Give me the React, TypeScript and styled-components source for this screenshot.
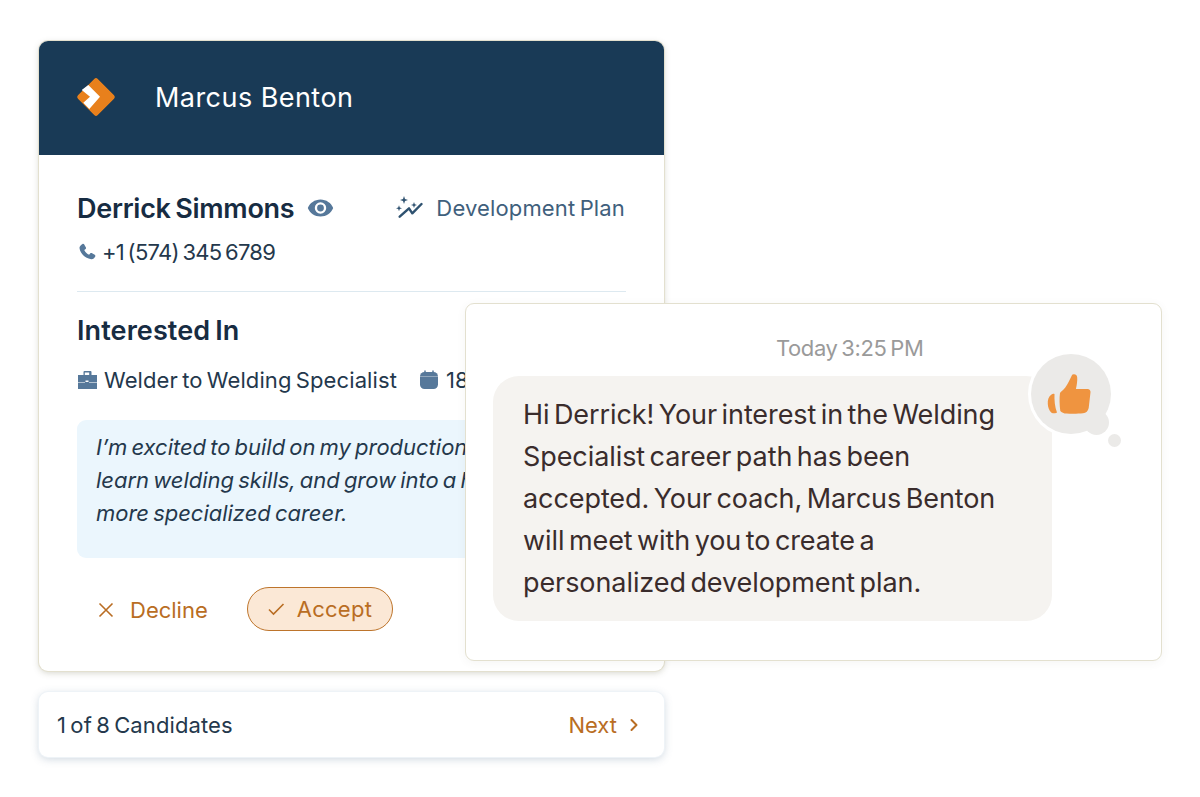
import React from "react";
import styled, { createGlobalStyle } from "styled-components";

const Global = createGlobalStyle`
  html, body { margin: 0; padding: 0; background: #fff; }
  *, *::before, *::after { box-sizing: border-box; }
  body { font-family: Inter, "Liberation Sans", sans-serif; overflow: hidden; }
`;

const Stage = styled.div`
  position: relative;
  width: 1200px;
  height: 797px;
  padding: 41px 0 0 39px;
  display: flex;
  flex-direction: column;
  gap: 21px;
`;

const Card = styled.section`
  width: 625px;
  height: 630px;
  border-radius: 9px;
  background: #fff;
  box-shadow: 0 0 0 1px #e3e0cf, 0 2px 6px rgba(90, 90, 60, 0.25);
  overflow: hidden;
  flex: none;
`;

const Header = styled.header`
  height: 114px;
  background: #193a56;
  display: flex;
  align-items: center;
  padding: 0 0 2px 37px;
  gap: 39px;
`;

const HeaderName = styled.h1`
  margin: 0;
  font-size: 27px;
  font-weight: 400;
  color: #fff;
  letter-spacing: 0.45px;
`;

const Body = styled.div`
  padding: 36px 38px 0;
`;

const TopRow = styled.div`
  display: flex;
  align-items: center;
  justify-content: space-between;
  height: 34px;
`;

const NameWrap = styled.div`
  display: flex;
  align-items: center;
  gap: 13px;
`;

const Name = styled.h2`
  margin: 0;
  font-size: 27px;
  font-weight: 600;
  color: #172c42;
  letter-spacing: -0.27px;
  word-spacing: -2px;
`;

const PlanLink = styled.div`
  display: flex;
  align-items: center;
  gap: 13px;
  font-size: 22px;
  color: #3f607c;
  letter-spacing: 0.15px;
  word-spacing: -2px;
  margin-right: 1px;
`;

const Phone = styled.div`
  display: flex;
  align-items: center;
  gap: 5px;
  margin-top: 12px;
  height: 30px;
  font-size: 22px;
  color: #24384c;
  letter-spacing: -0.7px;
  word-spacing: -2px;
`;

const Rule = styled.hr`
  border: 0;
  height: 1px;
  background: #dde9f0;
  margin: 24px 0 0;
`;

const SectionTitle = styled.h3`
  margin: 21px 0 0;
  font-size: 27px;
  line-height: 36px;
  font-weight: 600;
  color: #172c42;
  letter-spacing: 0.1px;
  word-spacing: -2px;
`;

const MetaRow = styled.div`
  display: flex;
  align-items: center;
  margin-top: 16px;
  height: 30px;
  white-space: nowrap;
`;

const MetaItem = styled.div`
  display: flex;
  align-items: center;
  gap: 7px;
  font-size: 22px;
  color: #24384c;
  letter-spacing: 0.1px;
  word-spacing: -2px;
  margin-right: 22px;
`;

const Note = styled.p`
  margin: 25px 0 0;
  width: 549px;
  height: 138px;
  padding: 11px 19px;
  border-radius: 9px;
  background: #ebf6fd;
  font-size: 22px;
  line-height: 33px;
  font-style: italic;
  color: #24384c;
  letter-spacing: -0.02px;
  word-spacing: -2px;
  white-space: nowrap;
`;

const Actions = styled.div`
  display: flex;
  align-items: center;
  margin-top: 29px;
  padding-left: 21px;
  gap: 39px;
`;

const Decline = styled.button`
  display: flex;
  align-items: center;
  gap: 16px;
  padding: 1px 0 0;
  border: 0;
  background: none;
  font: inherit;
  font-size: 22px;
  color: #b96d23;
  letter-spacing: 0;
`;

const Accept = styled.button`
  display: flex;
  align-items: center;
  gap: 12px;
  width: 146px;
  height: 44px;
  padding: 0 0 1px 20px;
  border: 1px solid #bd742b;
  border-radius: 22px;
  background: #fbe8d6;
  font: inherit;
  font-size: 22px;
  color: #b96d23;
  letter-spacing: 0.25px;
`;

const Pager = styled.nav`
  width: 625px;
  height: 65px;
  padding: 0 25px 0 18px;
  border-radius: 9px;
  background: #fff;
  box-shadow: 0 0 0 1px #eef3f7, 0 2px 8px rgba(90, 120, 150, 0.3);
  display: flex;
  align-items: center;
  justify-content: space-between;
  flex: none;
`;

const PagerCount = styled.span`
  font-size: 22px;
  color: #24384c;
  letter-spacing: 0.1px;
  word-spacing: -2px;
`;

const Next = styled.span`
  display: flex;
  align-items: center;
  gap: 12px;
  margin-left: -1px;
  font-size: 22px;
  color: #b96d23;
`;

const Chat = styled.aside`
  position: absolute;
  left: 465px;
  top: 303px;
  width: 697px;
  height: 358px;
  padding: 29px 0 0 27px;
  background: #fff;
  border: 1px solid #e3e0cf;
  border-radius: 9px;
  box-shadow: 0 2px 10px rgba(90, 90, 60, 0.06);
`;

const Time = styled.div`
  padding-left: 283px;
  font-size: 22px;
  line-height: 30px;
  color: #9a9a9a;
  letter-spacing: -0.4px;
  word-spacing: -2px;
`;

const Bubble = styled.div`
  position: relative;
  width: 559px;
  height: 245px;
  margin-top: 13px;
  padding: 18px 30px;
  border-radius: 26px;
  background: #f5f3f0;
  font-size: 27px;
  line-height: 42px;
  color: #3a2c2c;
  letter-spacing: -0.08px;
  word-spacing: -3px;
  white-space: nowrap;
`;

const Reaction = styled.div`
  position: absolute;
  left: 538px;
  top: -22px;
  width: 80px;
  height: 80px;
  padding-right: 5px;
  border-radius: 50%;
  background: #ebeae8;
  box-shadow: 0 0 0 3px #fff;
  display: flex;
  align-items: center;
  justify-content: center;
`;

const Puff = styled.span<{ $size: number; $x: number; $y: number }>`
  position: absolute;
  width: ${(p) => p.$size}px;
  height: ${(p) => p.$size}px;
  left: ${(p) => p.$x}px;
  top: ${(p) => p.$y}px;
  border-radius: 50%;
  background: #ebeae8;
`;

const Logo = () => (
  <svg width="40" height="40" viewBox="0 0 40 40">
    <rect x="6" y="6" width="28" height="28" rx="2.500" transform="rotate(45 20 20)" fill="#e8801c" />
    <path d="M12.300 8 L24 19.700 L13.300 32 L7.300 25.700 L14 19.700 L5.700 13 Z" fill="#fff" />
  </svg>
);

const Eye = () => (
  <svg width="27" height="20" viewBox="0 0 27 20">
    <path
      fillRule="evenodd"
      fill="#56789a"
      d="M13.5 1.5C7.7 1.5 2.8 5 .8 10c2 5 6.900 8.500 12.700 8.500S24.200 15 26.200 10C24.200 5 19.300 1.500 13.500 1.500zM13.500 15.700a5.700 5.700 0 1 1 0-11.400 5.700 5.700 0 0 1 0 11.400zM13.500 6.600a3.400 3.400 0 1 0 0 6.800 3.400 3.400 0 0 0 0-6.800z"
    />
  </svg>
);

const PlanIcon = () => (
  <svg width="27" height="24" viewBox="0 0 27 24" fill="none" stroke="#2f5270" strokeWidth="2.400" strokeLinecap="round" strokeLinejoin="round">
    <path d="M3.700 20.700 L13 12.300 L16.300 17.300 L25.500 8" />
    <path fill="#2f5270" stroke="none" d="M8 0l1 3 3 1-3 1-1 3-1-3-3-1 3-1zM3 9.300l.8 2.200 2.200.8-2.200.8-.8 2.200-.8-2.200-2.200-.8 2.200-.8zM18 6l.8 2.200L21 9l-2.200.8-.8 2.200-.8-2.200L15 9l2.200-.8z" />
  </svg>
);

const PhoneIcon = () => (
  <svg width="20" height="20" viewBox="0 0 24 24" fill="#56789a">
    <path d="M6.600 2.300c.7-.4 1.500-.2 1.900.5l2.200 3.700c.4.6.2 1.400-.3 1.800L8.700 9.500c1 2.400 3.300 4.800 5.800 5.900l1.300-1.700c.4-.6 1.200-.7 1.800-.4l3.700 2.100c.7.400.9 1.200.6 1.900-.9 2-2.700 3.500-4.800 3.300C10 20 3.600 13.500 3 7.300c-.2-2 1.700-4 3.600-5z" />
  </svg>
);

const Briefcase = () => (
  <svg width="20" height="20" viewBox="0 0 20 20">
    <path fill="#56789a" fillRule="evenodd" d="M6.500 1h7a1 1 0 0 1 1 1v3H20v14H1V5h5.500V2a1 1 0 0 1 1-1zM7.800 2.600V5h4.400V2.600zM8.500 10.500v1.500h3v-1.500z" />
    <path stroke="#fff" strokeWidth="0.800" d="M1 12.500h7M12 12.500h8" opacity="0.7" />
  </svg>
);

const Calendar = () => (
  <svg width="20" height="20" viewBox="0 0 20 20" fill="#56789a">
    <rect x="1" y="2" width="18" height="17" rx="4.500" />
    <path stroke="#fff" strokeWidth="1" d="M1 6.500h18" opacity="0.35" />
    <path stroke="#56789a" strokeWidth="1.500" d="M6 .5v3M14 .5v3" />
  </svg>
);

const Cross = () => (
  <svg width="16" height="16" viewBox="0 0 16 16" stroke="#b96d23" strokeWidth="1.600" fill="none">
    <path d="M1.500 1.500l13 13M14.500 1.500l-13 13" />
  </svg>
);

const Check = () => (
  <svg width="17" height="14" viewBox="0 0 17 14" stroke="#b96d23" strokeWidth="1.600" fill="none">
    <path d="M1 7.500l4.500 4.500L15.500 2" />
  </svg>
);

const Chevron = () => (
  <svg width="10" height="14" viewBox="0 0 10 14" stroke="#b96d23" strokeWidth="2" fill="none" strokeLinecap="round" strokeLinejoin="round">
    <path d="M2.500 2l5 5-5 5" />
  </svg>
);

const Thumb = () => (
  <svg width="44" height="42" viewBox="0 0 44 42" fill="#ef9440">
    <path d="M7.500 21c-1-.5-1.800-.5-3 .5C1.500 23.500.5 27 .8 31c.2 3 1.300 7 3.700 8.700 1.500.8 5 .7 5.500-.3-2.300-5.500-2.700-13-2.500-18.400z" />
    <path d="M26 1.500c2.200-.6 4 .7 4.200 3 .3 3-.4 8-1.300 11.500h11.600c2 0 3.200 1.500 3 3.300l-1.800 15.700c-.7 3-2.500 5-5.700 5.300-5 .5-12 .5-16.500.2-2.500-.1-5-1-6.200-2.600-.8-6-1-13-.3-17.800.6-1.700 3.500-3 5.300-5.700 2.800-3.800 4.500-8 6.500-11.800.2-.6.400-1 1-1.100z" />
  </svg>
);

export default function App() {
  return (
    <Stage>
      <Global />
      <Card>
        <Header>
          <Logo />
          <HeaderName>Marcus Benton</HeaderName>
        </Header>
        <Body>
          <TopRow>
            <NameWrap>
              <Name>Derrick Simmons</Name>
              <Eye />
            </NameWrap>
            <PlanLink>
              <PlanIcon />
              Development Plan
            </PlanLink>
          </TopRow>
          <Phone>
            <PhoneIcon />
            +1 (574) 345 6789
          </Phone>
          <Rule />
          <SectionTitle>Interested In</SectionTitle>
          <MetaRow>
            <MetaItem>
              <Briefcase />
              Welder to Welding Specialist
            </MetaItem>
            <MetaItem>
              <Calendar />
              18 months
            </MetaItem>
          </MetaRow>
          <Note>
            I’m excited to build on my production line experience,
            <br />
            learn welding skills, and grow into a higher-paying,
            <br />
            more specialized career.
          </Note>
          <Actions>
            <Decline>
              <Cross />
              Decline
            </Decline>
            <Accept>
              <Check />
              Accept
            </Accept>
          </Actions>
        </Body>
      </Card>
      <Pager>
        <PagerCount>1 of 8 Candidates</PagerCount>
        <Next>
          Next
          <Chevron />
        </Next>
      </Pager>
      <Chat>
        <Time>Today 3:25 PM</Time>
        <Bubble>
          Hi Derrick! Your interest in the Welding
          <br />
          Specialist career path has been
          <br />
          accepted. Your coach, Marcus Benton
          <br />
          will meet with you to create a
          <br />
          personalized development plan.
          <Reaction>
            <Thumb />
          </Reaction>
          <Puff $size={25} $x={591} $y={34} />
          <Puff $size={13} $x={615} $y={58} />
        </Bubble>
      </Chat>
    </Stage>
  );
}
